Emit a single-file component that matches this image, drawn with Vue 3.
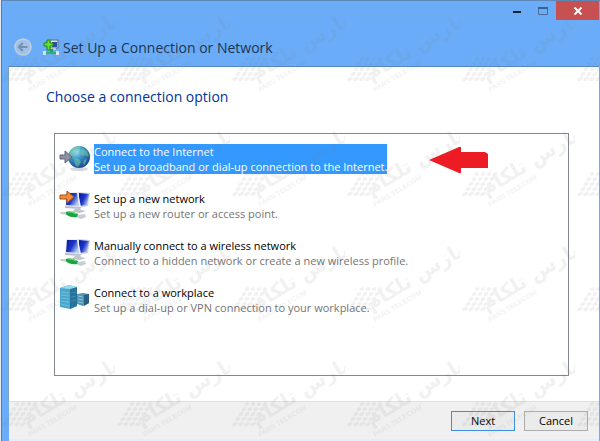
<template>
  <div class="desktop">
    <main class="window">
      <header class="titlebar">
        <div class="caption">
          <button class="caption-btn minimize" type="button" aria-label="Minimize">
            <svg width="10" height="10" viewBox="0 0 10 10">
              <rect x="1" y="5" width="8" height="2" fill="#16222f" />
            </svg>
          </button>
          <button class="caption-btn maximize" type="button" aria-label="Maximize">
            <svg width="10" height="8" viewBox="0 0 10 8">
              <path d="M.5 1v6.500h9V1" fill="none" stroke="#4a6d97" />
              <path d="M0 1h10" stroke="#3d5f88" stroke-width="2" />
            </svg>
          </button>
          <button class="caption-btn close" type="button" aria-label="Close">
            <svg width="10" height="8" viewBox="0 0 10 8">
              <path d="M1.500 .5 8.500 7.500M8.500 .5 1.500 7.500" stroke="#fff" stroke-width="2" />
            </svg>
          </button>
        </div>
        <div class="nav">
          <button class="back" type="button" aria-label="Back">
            <svg width="18" height="18" viewBox="0 0 18 18">
              <circle cx="9" cy="9" r="8" fill="#9fc2ea" stroke="#c0cddc" stroke-width="1.500" />
              <path d="M13.500 9H5M8.800 5 4.800 9l4 4" fill="none" stroke="#7890ab" stroke-width="2" />
            </svg>
          </button>
          <svg class="title-icon" width="16" height="16" viewBox="0 0 16 16">
            <rect x="7" y="1" width="8" height="8" fill="#d9e2ec" stroke="#5d6b7e" />
            <rect x="9" y="3" width="5" height="5" fill="#2c4f9e" />
            <rect x="5" y="9" width="8" height="2" fill="#b9c4cf" />
            <rect x="7" y="10" width="3" height="4" fill="#1fa06c" />
            <rect x="1" y="13" width="14" height="2" fill="#28b37c" />
            <rect x="0" y="12" width="3" height="4" fill="#dbe9ea" />
            <rect x="13" y="12" width="3" height="4" fill="#dbe9ea" />
            <path d="M4 1h3v3h3v3H7v4H4V7H1V4h3z" fill="#62e02f" stroke="#218a14" />
          </svg>
          <span class="title">Set Up a Connection or Network</span>
        </div>
      </header>

      <section class="content">
        <h1 class="heading">Choose a connection option</h1>
        <div class="list-box">
          <ul class="options">
            <li v-for="option in options" :key="option.id">
              <button
                type="button"
                class="option"
                :class="{ selected: selected === option.id }"
                @click="selected = option.id"
              >
                <svg v-if="option.id === 'internet'" class="icon" width="32" height="30" viewBox="0 0 32 30">
                  <defs>
                    <radialGradient id="globe" cx=".35" cy=".25" r=".8">
                      <stop offset="0" stop-color="#b5e6f8" />
                      <stop offset=".4" stop-color="#3b9bd0" />
                      <stop offset="1" stop-color="#123f8c" />
                    </radialGradient>
                  </defs>
                  <ellipse cx="20" cy="25" rx="9" ry="2" fill="#d5d9dd" />
                  <circle cx="20" cy="13" r="11" fill="url(#globe)" />
                  <path d="M12 7q4-5 9-5l1 2-4 2-1 4-4 1-2 3-2-1q0-3 3-6zM23 4l5 3 2 6-4-2-3 1-2-3zM15 14l5 1 2 3-3 5-3-2zM25 16l3-1-2 5-2 1z" fill="#6fc99b" opacity=".6" />
                  <path d="M1 11h5V7l7 6-7 6v-4H1z" fill="#8d909f" stroke="#62667a" />
                </svg>
                <svg v-else-if="option.id === 'workplace'" class="icon" width="32" height="30" viewBox="0 0 32 30">
                  <path d="M18 9l6-1 6 1v9l-6 3-6-2z" fill="#4f93b6" />
                  <path d="M25 10l5-1v9l-5 3z" fill="#2b607f" />
                  <path d="M19 11l5 1M19 14l5 1M19 17l5 1" stroke="#8cc6da" />
                  <path d="M1 3l9-3 8 2v19l-7 3-10-2z" fill="#4aa8cf" />
                  <path d="M11 4l7-2v19l-7 3z" fill="#26739c" />
                  <path d="M1 3l9-3 8 2-7 2z" fill="#9bd9ed" />
                  <path d="M2 7l8 1M2 10l8 1M2 13l8 1M2 16l8 1M2 19l8 2" stroke="#6fc0dd" />
                  <path d="M12 8l5-1M12 12l5-1M12 16l5-1" stroke="#3b8ab0" />
                </svg>
                <svg v-else class="icon" width="32" height="30" viewBox="0 0 32 30">
                  <defs>
                    <linearGradient id="screen" x1="0" y1="0" x2="1" y2=".6">
                      <stop offset="0" stop-color="#0717a6" />
                      <stop offset=".55" stop-color="#1e35c4" />
                      <stop offset="1" stop-color="#b6cdf8" />
                    </linearGradient>
                  </defs>
                  <path d="M19 1l12 1-2 13-9 2z" fill="#cfd5de" />
                  <path d="M20 2l10 1-2 11-8 1z" fill="url(#screen)" />
                  <path d="M7 1l12 0 3 15-16 0z" fill="#eef0f4" />
                  <path d="M8 2l10 0 2 13-13-1z" fill="url(#screen)" />
                  <path d="M6 15l16 1-1 2-15-1z" fill="#b9bfc8" />
                  <path d="M16 18l5-1 1 2 5 1-6 2-8-1z" fill="#c0c6cd" />
                  <path d="M1 21l9 0 8 3 8-1 1 3-5 2-8-3-12-2z" fill="#c9ced3" />
                  <path d="M7 21q4-2 12 2l-1 3q-7 1-11-3z" fill="#18a53d" />
                  <path d="M9 21q4-1 8 2" fill="none" stroke="#7ee08b" />
                  <path v-if="option.id === 'router'" d="M1 4h7V0l7 6-7 6V8H1z" fill="#f58c35" stroke="#a94f16" />
                </svg>
                <span class="text">
                  <span class="name">{{ option.name }}</span>
                  <span class="desc">{{ option.desc }}</span>
                </span>
              </button>
            </li>
          </ul>
          <svg class="pointer" width="60" height="28" viewBox="0 0 60 28">
            <path d="M0 14 30 1h2v5h24l3 2v14H32v5h-2z" fill="#ed1c24" />
          </svg>
        </div>
      </section>

      <footer class="footer">
        <button class="btn primary" type="button">Next</button>
        <button class="btn" type="button">Cancel</button>
      </footer>
    </main>

    <svg class="watermark" width="100%" height="100%" aria-hidden="true">
      <defs>
        <pattern id="brand" width="115" height="115" patternUnits="userSpaceOnUse">
          <g fill="#7b7f86">
            <ellipse
              v-for="(dot, i) in dots"
              :key="i"
              :cx="dot.x"
              :cy="dot.y"
              :rx="dot.r"
              ry="1.800"
              :transform="`rotate(-30 ${dot.x} ${dot.y})`"
            />
            <g transform="translate(26 81) rotate(-31)">
              <text class="brand-fa" x="0" y="0">پارس تلکام</text>
            </g>
            <g transform="translate(30 92) rotate(-31)">
              <text class="brand-en" x="0" y="0">PARS TELECOM</text>
            </g>
          </g>
        </pattern>
      </defs>
      <rect width="100%" height="100%" fill="url(#brand)" />
    </svg>
  </div>
</template>

<script setup>
import { ref } from 'vue'

const selected = ref('internet')

const options = [
  {
    id: 'internet',
    name: 'Connect to the Internet',
    desc: 'Set up a broadband or dial-up connection to the Internet.'
  },
  {
    id: 'router',
    name: 'Set up a new network',
    desc: 'Set up a new router or access point.'
  },
  {
    id: 'wireless',
    name: 'Manually connect to a wireless network',
    desc: 'Connect to a hidden network or create a new wireless profile.'
  },
  {
    id: 'workplace',
    name: 'Connect to a workplace',
    desc: 'Set up a dial-up or VPN connection to your workplace.'
  }
]

// slanted dot grid of the brand mark, thinning out towards the top
const dots = []
for (let row = 0; row < 5; row++) {
  for (let col = 0; col < 4; col++) {
    dots.push({ x: 5 + col * 6 + row * 3, y: 79 - row * 5, r: 3 - row * 0.2 })
  }
}
</script>

<style>
body {
  margin: 0;
}
</style>

<style scoped>
.desktop {
  position: relative;
  box-sizing: border-box;
  min-height: 100vh;
  display: flex;
  padding-left: 1px;
  background: #e4e9ef;
  font-family: 'Open Sans', 'Noto Sans', sans-serif;
  font-size: 11px;
  color: #000;
}

button {
  font: inherit;
  color: inherit;
}

.window {
  flex: 1;
  display: flex;
  flex-direction: column;
  padding: 0 1px 0 7px;
  border-top: 1px solid #5f87b5;
  border-left: 1px solid #4b7fbd;
  background: #6aacf7;
}

.caption {
  display: flex;
  justify-content: flex-end;
  height: 19px;
}

.caption-btn {
  display: flex;
  align-items: center;
  justify-content: center;
  width: 26px;
  padding: 0;
  border: 0;
  background: transparent;
}

.caption-btn.close {
  width: 43px;
  background: #c75050;
}

.nav {
  display: flex;
  align-items: center;
  height: 22px;
  padding: 16px 5px 8px;
}

.back {
  display: flex;
  padding: 0;
  border: 0;
  background: transparent;
}

.title-icon {
  margin: 0 4px 0 11px;
}

.title {
  font-size: 14px;
  color: #1c3450;
}

.content {
  flex: 1;
  display: flex;
  flex-direction: column;
  padding: 18px 30px 25px 45px;
  border-top: 1px solid #5688c0;
  border-left: 1px solid #7f9fc4;
  margin-left: -1px;
  background: #fff;
}

.heading {
  margin: 0 0 24px -8px;
  font-size: 14px;
  font-weight: 400;
  line-height: 24px;
  color: #003399;
}

.list-box {
  flex: 1;
  display: flex;
  align-items: flex-start;
  border: 1px solid #828790;
  padding: 10px 4px;
}

.options {
  display: grid;
  gap: 17px;
  margin: 0;
  padding: 0;
  list-style: none;
}

.option {
  display: flex;
  padding: 0;
  border: 0;
  background: transparent;
  text-align: left;
}

.icon {
  margin-right: 3px;
}

.text {
  display: flex;
  flex-direction: column;
  line-height: 15px;
  white-space: nowrap;
}

.desc {
  color: #757575;
}

.selected .text {
  background: #3399ff;
  color: #fff;
}

.selected .desc {
  color: #fff;
}

.pointer {
  margin: 2px 0 0 21px;
}

.footer {
  display: flex;
  justify-content: flex-end;
  gap: 9px;
  padding: 9px 11px 8px;
  border-top: 1px solid #dfdfdf;
  border-bottom: 2px solid #e0effb;
  background: #f0f0f0;
}

.btn {
  width: 64px;
  height: 20px;
  padding: 0;
  border: 1px solid #acacac;
  background: #ebebeb;
  line-height: 18px;
}

.btn.primary {
  border-color: #3c8fdc;
}

.watermark {
  position: absolute;
  inset: 0;
  opacity: 0.1;
  pointer-events: none;
}

.brand-fa {
  font-family: 'DejaVu Sans', sans-serif;
  font-size: 20px;
  font-weight: 700;
}

.brand-en {
  font-family: 'Liberation Sans', sans-serif;
  font-size: 7px;
  font-weight: 700;
}
</style>
